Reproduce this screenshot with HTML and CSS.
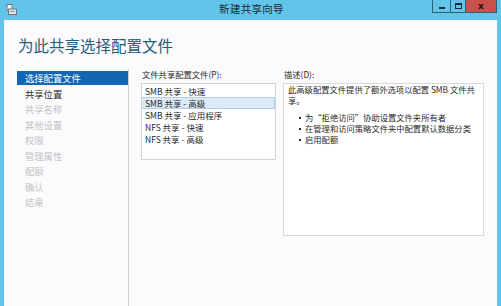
FILE: index.html
```html
<!DOCTYPE html>
<html lang="zh-CN">
<head>
<meta charset="utf-8">
<title>新建共享向导</title>
<link rel="stylesheet" href="styles.css">
</head>
<body>
<div class="window">
  <div class="titlebar">
    <div class="tb-left">
      <svg class="app-icon" width="11" height="11" viewBox="0 0 11 11">
        <rect x="1" y="0.5" width="5" height="6" fill="#f4f6f8" stroke="#6d7a86" stroke-width="1"/>
        <rect x="2.5" y="5" width="8" height="5.5" fill="#dfe4ea" stroke="#6d7a86" stroke-width="1"/>
        <rect x="4" y="7" width="5" height="1" fill="#8a96a2"/>
      </svg>
    </div>
    <div class="tb-title">新建共享向导</div>
    <div class="tb-buttons">
      <div class="tbtn tbtn-min"><span class="min-glyph"></span></div>
      <div class="tbtn tbtn-max"><span class="max-glyph"></span></div>
      <div class="tbtn tbtn-close">x</div>
    </div>
  </div>
  <div class="client">
    <h1 class="heading">为此共享选择配置文件</h1>
    <div class="body">
      <ul class="nav">
        <li class="nav-item selected">选择配置文件</li>
        <li class="nav-item active">共享位置</li>
        <li class="nav-item disabled">共享名称</li>
        <li class="nav-item disabled">其他设置</li>
        <li class="nav-item disabled">权限</li>
        <li class="nav-item disabled">管理属性</li>
        <li class="nav-item disabled">配额</li>
        <li class="nav-item disabled">确认</li>
        <li class="nav-item disabled">结果</li>
      </ul>
      <div class="main">
        <div class="col col-list">
          <div class="label">文件共享配置文件(P):</div>
          <ul class="listbox">
            <li class="list-item">SMB 共享 - 快速</li>
            <li class="list-item selected">SMB 共享 - 高级</li>
            <li class="list-item">SMB 共享 - 应用程序</li>
            <li class="list-item">NFS 共享 - 快速</li>
            <li class="list-item">NFS 共享 - 高级</li>
          </ul>
        </div>
        <div class="col col-desc">
          <div class="label">描述(D):</div>
          <div class="descbox">
            <p class="desc-text">此高级配置文件提供了额外选项以配置 SMB 文件共<br>享。</p>
            <ul class="bullets">
              <li>为“拒绝访问”协助设置文件夹所有者</li>
              <li>在管理和访问策略文件夹中配置默认数据分类</li>
              <li>启用配额</li>
            </ul>
          </div>
        </div>
      </div>
    </div>
  </div>
</div>
</body>
</html>
```

FILE: styles.css
```css
* { box-sizing: border-box; }
html, body { margin: 0; padding: 0; }
body {
  width: 501px;
  height: 306px;
  overflow: hidden;
  font-family: "Noto Sans CJK SC", "Noto Sans", sans-serif;
  background: #63c4ea;
}
ul, p, h1 { margin: 0; padding: 0; list-style: none; }

.window {
  width: 501px;
  height: 306px;
  display: flex;
  flex-direction: column;
  background: #63c4ea;
}

.titlebar {
  height: 20px;
  flex: none;
  display: grid;
  grid-template-columns: 1fr auto 1fr;
  align-items: start;
  padding: 0 4px 0 6px;
}
.tb-left { padding-top: 4px; }
.app-icon { display: block; }
.tb-title {
  font-size: 10.5px;
  line-height: 12px;
  padding-top: 3px;
  color: #1b2a33;
  letter-spacing: 0.3px;
}
.tb-buttons {
  display: flex;
  justify-content: flex-end;
}
.tbtn {
  height: 13px;
  border: 1px solid #2f5f74;
  border-top: none;
  display: flex;
  align-items: center;
  justify-content: center;
}
.tbtn-min { width: 19px; background: #63c4ea; }
.tbtn-max { width: 15px; background: #63c4ea; border-left: none; }
.tbtn-close {
  width: 31px;
  background: #c9514c;
  border-left: none;
  color: #2b0e0c;
  font-family: "DejaVu Sans", sans-serif;
  font-weight: bold;
  font-size: 9px;
  line-height: 10px;
}
.min-glyph {
  display: block;
  width: 6px;
  height: 2px;
  margin-top: 4px;
  background: #1c2c36;
}
.max-glyph {
  display: block;
  width: 7px;
  height: 6px;
  border: 1px solid #1c2c36;
  border-top-width: 2px;
}

.client {
  flex: 1;
  margin: 0 4px;
  background: #fbfafd;
  display: flex;
  flex-direction: column;
}
.heading {
  font-weight: normal;
  font-size: 15.5px;
  line-height: 20px;
  color: #215f78;
  margin: 15px 0 0 14px;
}
.body {
  flex: 1;
  display: flex;
  margin-top: 14px;
}
.nav {
  width: 125px;
  flex: none;
  border-right: 1px solid #cfcfd2;
  padding-top: 2px;
}
.nav-item {
  height: 15.5px;
  line-height: 14px;
  font-size: 9.3px;
  margin-left: 13px;
  padding-left: 8px;
  color: #c4c4c6;
}
.nav-item.selected {
  background: #1266b4;
  color: #ffffff;
  height: 14px;
  margin-bottom: 1.5px;
}
.nav-item.active { color: #2d2d2d; }

.main {
  flex: 1;
  display: flex;
  gap: 7px;
  padding-left: 12px;
}
.col { display: flex; flex-direction: column; }
.label {
  font-size: 8.3px;
  line-height: 11px;
  color: #2a2a2a;
  margin-bottom: 3px;
  padding-left: 1px;
}
.col-list { width: 135px; }
.col-desc { width: 201px; }

.listbox {
  height: 77px;
  background: #ffffff;
  border: 1px solid #d4d4d6;
  padding-top: 1px;
}
.list-item {
  height: 12px;
  line-height: 12px;
  font-size: 8.5px;
  color: #2a2a2a;
  padding-left: 3px;
}
.list-item.selected {
  background: #dce9f6;
  border: 1px solid #b3cfe9;
  border-left: none;
  line-height: 10px;
}

.descbox {
  height: 153px;
  background: #ffffff;
  border: 1px solid #d9d9db;
  padding: 0 4px;
  font-size: 8.3px;
  color: #2a2a2a;
}
.desc-text { line-height: 10.5px; }
.bullets { margin-top: 7px; padding-left: 11px; }
.bullets li {
  line-height: 11px;
  display: flex;
  align-items: center;
}
.bullets li::before {
  content: "";
  width: 2px;
  height: 2px;
  margin-right: 4px;
  background: #2a2a2a;
  flex: none;
}
```
